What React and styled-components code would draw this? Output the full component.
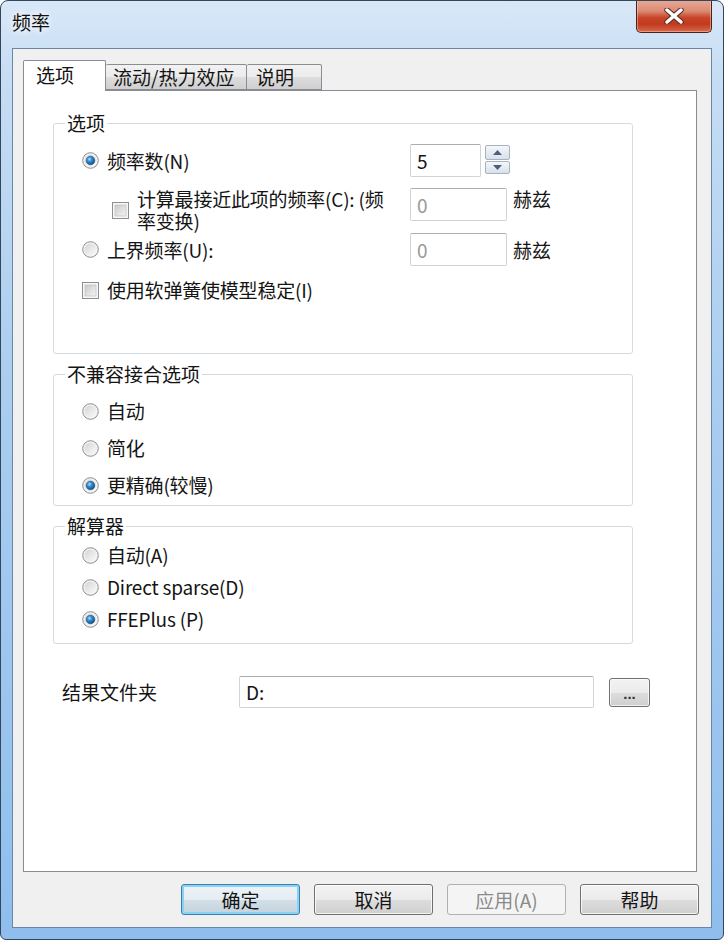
import React from 'react'
import styled, { createGlobalStyle } from 'styled-components'

const Global = createGlobalStyle`
html, body {
  margin: 0;
  padding: 0;
  background: #ffffff;
}
* { box-sizing: border-box; }
`

const font = `"Noto Sans CJK SC", "Noto Sans", sans-serif`

const Window = styled.div`
width: 724px;
height: 940px;
border: 1px solid #34465a;
border-radius: 8px 8px 6px 6px;
padding: 0 11px 11px;
display: flex;
flex-direction: column;
background: linear-gradient(180deg, #d9e8f8 0%, #c6ddf4 8%, #abcef0 40%, #8fbeee 100%);
font-family: ${font};
color: #141414;
overflow: hidden;
`

const TitleBar = styled.div`
height: 47px;
display: flex;
justify-content: space-between;
align-items: flex-start;
`

const Title = styled.div`
margin-top: 9px;
font-size: 19px;
line-height: 24px;
color: #101010;
text-shadow: 0 0 6px rgba(255,255,255,0.95), 0 0 10px rgba(255,255,255,0.8);
`

const CloseButton = styled.div`
width: 76px;
height: 33px;
margin-top: -1px;
border: 1px solid #4a2219;
border-top: none;
border-radius: 0 0 5px 5px;
background: linear-gradient(180deg, #e9a998 0%, #dc8a72 35%, #c8452a 55%, #c03a1e 75%, #d9694a 100%);
box-shadow: inset 0 0 0 1px rgba(255,220,210,0.45);
display: flex;
align-items: center;
justify-content: center;
`

const Client = styled.div`
flex: 1;
display: flex;
flex-direction: column;
background: #f0f0f0;
border: 1px solid #6a87a6;
padding: 11px 12px 12px 10px;
`

const TabStrip = styled.div`
height: 30px;
display: flex;
align-items: flex-end;
`

const Tab = styled.div`
position: relative;
z-index: ${(p) => (p.$active ? 2 : 0)};
width: ${(p) => p.$w}px;
height: ${(p) => (p.$active ? 31 : 26)}px;
margin-bottom: ${(p) => (p.$active ? -1 : 0)}px;
border: 1px solid #898c95;
border-bottom: ${(p) => (p.$active ? 'none' : '1px solid #898c95')};
border-left: ${(p) => (p.$first ? '1px solid #898c95' : 'none')};
border-radius: 2px 2px 0 0;
background: ${(p) => (p.$active ? '#ffffff' : 'linear-gradient(180deg, #f2f2f2 0%, #ebebeb 50%, #dddddd 51%, #cfcfcf 100%)')};
font-size: 19px;
line-height: ${(p) => (p.$active ? 28 : 24)}px;
padding-left: ${(p) => p.$pl}px;
white-space: nowrap;
`

const Panel = styled.div`
flex: 1;
margin-right: 2px;
background: #ffffff;
border: 1px solid #898c95;
padding: 22px 63px 0 29px;
display: flex;
flex-direction: column;
`

const Group = styled.fieldset`
margin: ${(p) => p.$mt || 0}px 0 0;
height: ${(p) => p.$h}px;
border: 1px solid #d5dadf;
border-radius: 3px;
padding: 0 0 0 11px;
min-width: 0;
`

const Legend = styled.legend`
padding: 0 2px;
font-size: 19px;
line-height: 20px;
`

const GroupBody = styled.div`
padding-left: 17px;
display: flex;
flex-direction: column;
`

const Row = styled.div`
margin-top: ${(p) => p.$mt || 0}px;
display: grid;
grid-template-columns: 322px auto auto;
justify-content: start;
align-items: center;
column-gap: 6px;
`

const Choice = styled.label`
display: flex;
align-items: center;
gap: ${(p) => p.$gap || 8}px;
padding-left: ${(p) => p.$indent || 0}px;
font-size: 19px;
line-height: 22px;
white-space: nowrap;
letter-spacing: -0.2px;
`

const TextBox = styled.div`
flex-shrink: 0;
width: ${(p) => p.$w}px;
height: ${(p) => p.$h || 33}px;
border: 1px solid #d0d3d8;
border-top-color: #abadb3;
border-radius: 2px;
background: #ffffff;
padding-left: 6px;
font-size: 19px;
line-height: ${(p) => (p.$h || 33) - 2}px;
color: ${(p) => (p.$muted ? '#9a9a9a' : '#141414')};
align-self: start;
`

const Unit = styled.span`
font-size: 19px;
line-height: 22px;
align-self: ${(p) => p.$self || 'center'};
padding-top: ${(p) => p.$pt || 0}px;
`

const SpinBox = styled.div`
display: flex;
align-items: flex-start;
gap: 4px;
`

const SpinButtons = styled.div`
margin-top: 1px;
display: flex;
flex-direction: column;
gap: 1px;
`

const SpinButton = styled.div`
width: 25px;
height: ${(p) => p.$h}px;
border: 1px solid #a7b2c0;
border-radius: 2px;
background: linear-gradient(180deg, #f5f8fb 0%, #e6ecf3 50%, #d8e1eb 100%);
display: flex;
align-items: center;
justify-content: center;
`

const FolderRow = styled.div`
margin-top: 32px;
padding-left: 9px;
display: flex;
align-items: center;
`

const FolderLabel = styled.span`
flex-shrink: 0;
width: 177px;
font-size: 19px;
line-height: 22px;
`

const SmallButton = styled.div`
flex-shrink: 0;
margin-left: 15px;
width: 41px;
height: 29px;
border: 1px solid #707070;
border-radius: 3px;
background: linear-gradient(180deg, #f2f2f2 0%, #ebebeb 50%, #dddddd 51%, #cfcfcf 100%);
box-shadow: inset 0 0 0 1px rgba(255,255,255,0.7);
font-family: "Liberation Sans", sans-serif;
font-size: 15px;
font-weight: bold;
line-height: 30px;
text-align: center;
color: #333;
`

const ButtonBar = styled.div`
margin-top: 12px;
display: flex;
justify-content: flex-end;
gap: 14px;
`

const Button = styled.div`
width: 119px;
height: 31px;
border: 1px solid ${(p) => (p.$disabled ? '#adb2b5' : p.$default ? '#3c7fb1' : '#707070')};
border-radius: 3px;
background: ${(p) =>
  p.$disabled
    ? '#f4f4f4'
    : p.$default
    ? 'linear-gradient(180deg, #eef4f8 0%, #e4ecf2 50%, #d3dfe8 51%, #c4d3de 100%)'
    : 'linear-gradient(180deg, #f2f2f2 0%, #ebebeb 50%, #dddddd 51%, #cfcfcf 100%)'};
box-shadow: ${(p) => (p.$default ? 'inset 0 0 0 2px #8ad2f4' : p.$disabled ? 'none' : 'inset 0 0 0 1px rgba(255,255,255,0.75)')};
color: ${(p) => (p.$disabled ? '#8a8a8a' : '#141414')};
font-size: 19px;
line-height: 29px;
text-align: center;
`

const Radio = ({ checked }) => (
  <svg width="17" height="17" viewBox="0 0 17 17">
    <defs>
      <linearGradient id="rbg" x1="0" y1="0" x2="1" y2="1">
        <stop offset="0" stopColor="#d4d4d4" />
        <stop offset="1" stopColor="#fbfbfb" />
      </linearGradient>
      <radialGradient id="rdot" cx="0.38" cy="0.35" r="0.7">
        <stop offset="0" stopColor="#b8e4fc" />
        <stop offset="0.35" stopColor="#3a94d6" />
        <stop offset="0.8" stopColor="#17609e" />
        <stop offset="1" stopColor="#103f6c" />
      </radialGradient>
    </defs>
    <circle cx="8.5" cy="8.5" r="7.8" fill="#f4f4f4" stroke="#8c8c8c" strokeWidth="1" />
    <circle cx="8.5" cy="8.5" r="6" fill="url(#rbg)" />
    {checked && <circle cx="8.5" cy="8.5" r="4.3" fill="url(#rdot)" stroke="#1b4f80" strokeWidth="0.6" />}
  </svg>
)

const Check = () => (
  <svg width="17" height="17" viewBox="0 0 17 17">
    <defs>
      <linearGradient id="cbg" x1="0" y1="0" x2="1" y2="1">
        <stop offset="0" stopColor="#c9c9c9" />
        <stop offset="1" stopColor="#f5f5f5" />
      </linearGradient>
    </defs>
    <rect x="0.5" y="0.5" width="16" height="16" fill="#f6f6f6" stroke="#8e8f8f" />
    <rect x="3" y="3" width="11" height="11" fill="url(#cbg)" stroke="#b8b8b8" strokeWidth="0.6" />
  </svg>
)

const Arrow = ({ up }) => (
  <svg width="9" height="5" viewBox="0 0 9 5">
    <path d={up ? 'M0 5 L4.5 0 L9 5 Z' : 'M0 0 L4.5 5 L9 0 Z'} fill="#4d5f7a" />
  </svg>
)

const CloseX = () => (
  <svg width="20" height="16" viewBox="0 0 20 16">
    <path d="M3 2 L17 14 M17 2 L3 14" stroke="#5a2a22" strokeWidth="5.5" strokeLinecap="round" />
    <path d="M3 2 L17 14 M17 2 L3 14" stroke="#ffffff" strokeWidth="3.5" strokeLinecap="round" />
  </svg>
)

const App = () => {
  return (
    <>
      <Global />
      <Window>
        <TitleBar>
          <Title>频率</Title>
          <CloseButton><CloseX /></CloseButton>
        </TitleBar>
        <Client>
          <TabStrip>
            <Tab $active $first $w={83} $pl={12}>选项</Tab>
            <Tab $w={141} $pl={7}>流动/热力效应</Tab>
            <Tab $w={75} $pl={9}>说明</Tab>
          </TabStrip>
          <Panel>
            <Group $h={241}>
              <Legend>选项</Legend>
              <GroupBody>
                <Row $mt={11}>
                  <Choice><Radio checked />频率数(N)</Choice>
                  <SpinBox>
                    <TextBox $w={71}>5</TextBox>
                    <SpinButtons>
                      <SpinButton $h={15}><Arrow up /></SpinButton>
                      <SpinButton $h={13}><Arrow /></SpinButton>
                    </SpinButtons>
                  </SpinBox>
                </Row>
                <Row $mt={11}>
                  <Choice $indent={30} $gap={8}>
                    <Check />
                    <span>计算最接近此项的频率(C): (频<br />率变换)</span>
                  </Choice>
                  <TextBox $w={97} $muted>0</TextBox>
                  <Unit $self="start" $pt={0}>赫兹</Unit>
                </Row>
                <Row $mt={1}>
                  <Choice><Radio />上界频率(U):</Choice>
                  <TextBox $w={97} $muted>0</TextBox>
                  <Unit>赫兹</Unit>
                </Row>
                <Row $mt={13}>
                  <Choice><Check />使用软弹簧使模型稳定(I)</Choice>
                </Row>
              </GroupBody>
            </Group>

            <Group $h={142} $mt={10}>
              <Legend>不兼容接合选项</Legend>
              <GroupBody>
                <Row $mt={16}><Choice><Radio />自动</Choice></Row>
                <Row $mt={15}><Choice><Radio />简化</Choice></Row>
                <Row $mt={15}><Choice><Radio checked />更精确(较慢)</Choice></Row>
              </GroupBody>
            </Group>

            <Group $h={128} $mt={10}>
              <Legend>解算器</Legend>
              <GroupBody>
                <Row $mt={8}><Choice><Radio />自动(A)</Choice></Row>
                <Row $mt={10}><Choice><Radio />Direct sparse(D)</Choice></Row>
                <Row $mt={10}><Choice><Radio checked />FFEPlus (P)</Choice></Row>
              </GroupBody>
            </Group>

            <FolderRow>
              <FolderLabel>结果文件夹</FolderLabel>
              <TextBox $w={355} $h={32}>D:</TextBox>
              <SmallButton>...</SmallButton>
            </FolderRow>
          </Panel>
          <ButtonBar>
            <Button $default>确定</Button>
            <Button>取消</Button>
            <Button $disabled>应用(A)</Button>
            <Button>帮助</Button>
          </ButtonBar>
        </Client>
      </Window>
    </>
  )
}

export default App
